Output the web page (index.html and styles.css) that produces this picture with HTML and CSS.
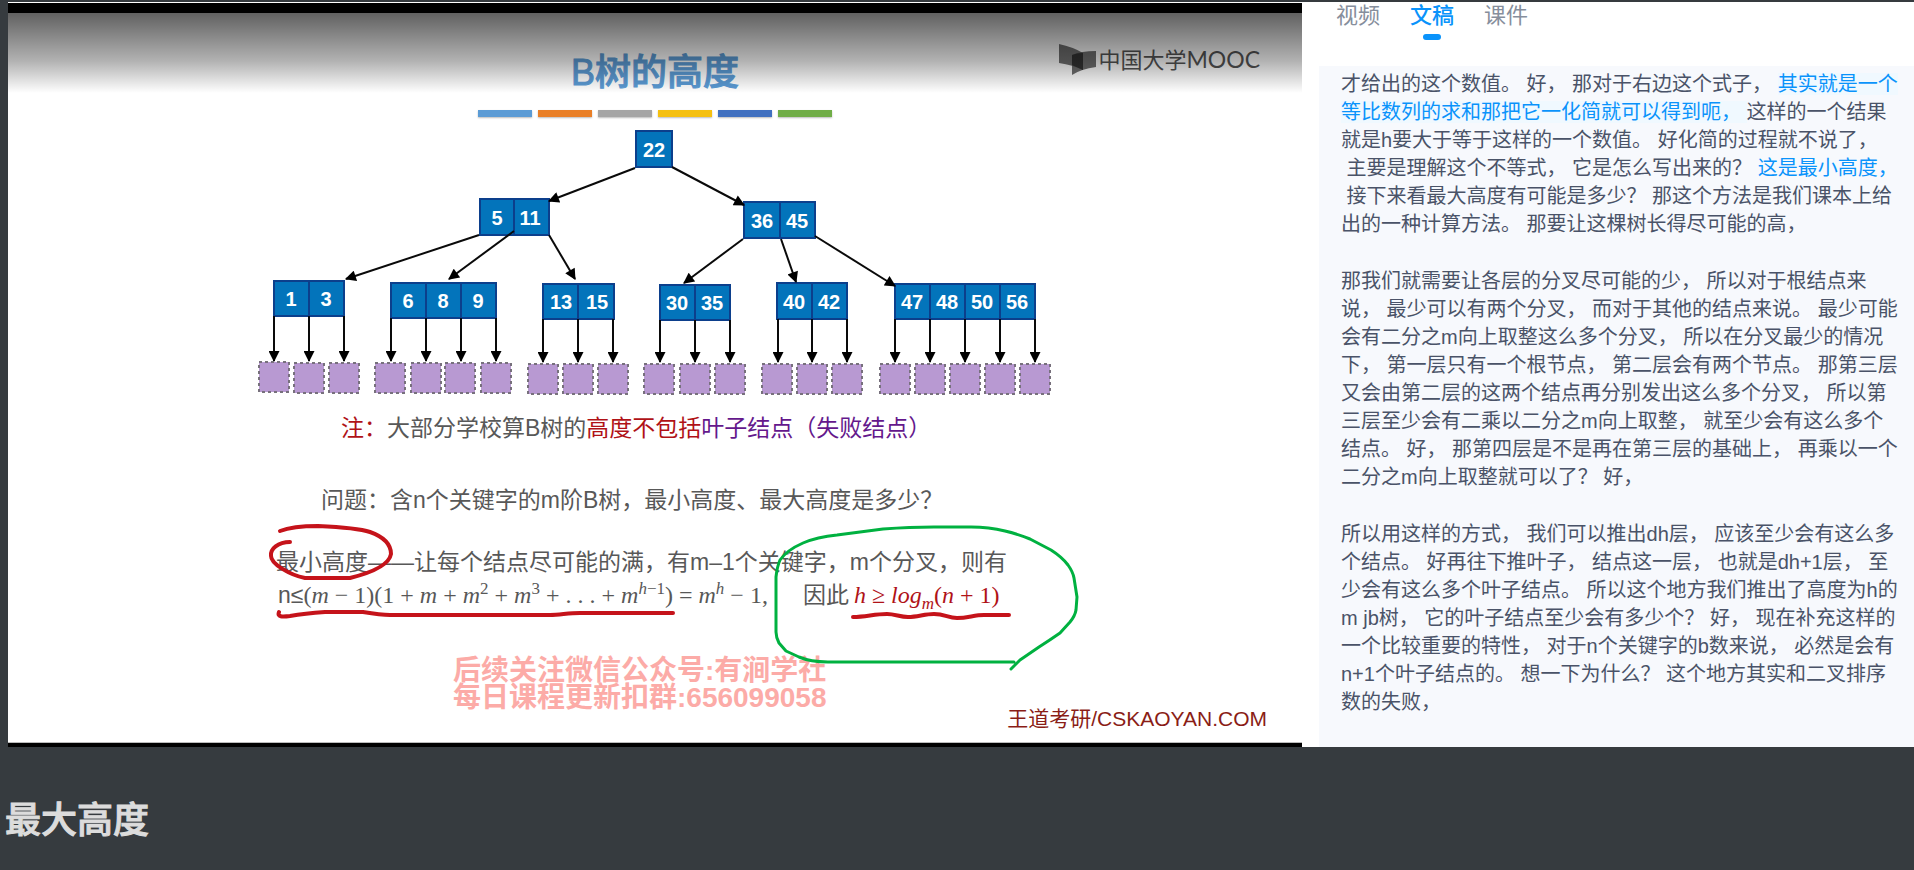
FILE: index.html
```html
<!DOCTYPE html>
<html lang="zh-CN">
<head>
<meta charset="utf-8">
<meta name="viewport" content="width=device-width, initial-scale=1">
<title>B树的高度</title>
<link rel="stylesheet" href="styles.css">
</head>
<body>
<main class="player">
  <section class="video" aria-label="视频画面">
    <div class="frame">
      <h1 class="title">B树的高度</h1>
      <div class="bars"><i class="bar sky"></i><i class="bar orange"></i><i class="bar gray"></i><i class="bar yellow"></i><i class="bar blue"></i><i class="bar green"></i></div>

      <svg class="tree" viewBox="8 126 1294 276" role="img" aria-label="B树">
        <defs>
          <marker id="tip" viewBox="0 0 10 10" refX="9" refY="5" markerWidth="12" markerHeight="11" markerUnits="userSpaceOnUse" orient="auto"><path d="M0 0 10 5 0 10z"/></marker>
        </defs>
        <g class="box">
          <rect x="636" y="131" width="36" height="36"/>
          <path d="M480 199h69v36h-69zM514 199v36"/>
          <path d="M744 202h71v36h-71zM780 202v36"/>
          <path d="M274 281h70v35h-70zM309 281v35"/>
          <path d="M391 283h105v35h-105zM426 283v35M461 283v35"/>
          <path d="M543 284h71v35h-71zM578 284v35"/>
          <path d="M660 285h70v35h-70zM695 285v35"/>
          <path d="M777 283h70v36h-70zM812 283v36"/>
          <path d="M895 284h140v35h-140zM930 284v35M965 284v35M1000 284v35"/>
        </g>
        <g class="edge">
          <path d="M635 168 549 201"/><path d="M672 167 744 205"/>
          <path d="M479 235 346 279"/><path d="M514 231 449 279"/><path d="M549 235 575 279"/>
          <path d="M743 239 684 283"/><path d="M781 239 796 282"/><path d="M815 236 895 286"/>
          <path d="M274 316V361"/><path d="M309 316V361"/><path d="M344 316V361"/>
          <path d="M391 318V361"/><path d="M426 318V361"/><path d="M461 318V361"/><path d="M496 318V361"/>
          <path d="M543 319V362"/><path d="M578 319V362"/><path d="M613 319V362"/>
          <path d="M660 320V362"/><path d="M695 320V362"/><path d="M730 320V362"/>
          <path d="M778 319V362"/><path d="M812 319V362"/><path d="M847 319V362"/>
          <path d="M895 319V362"/><path d="M930 319V362"/><path d="M965 319V362"/><path d="M1000 319V362"/><path d="M1035 319V362"/>
        </g>
        <g class="leaf">
          <rect x="259" y="362" width="30" height="30"/><rect x="294" y="363" width="30" height="30"/><rect x="329" y="363" width="30" height="30"/>
          <rect x="375" y="363" width="30" height="30"/><rect x="411" y="363" width="30" height="30"/><rect x="445" y="363" width="30" height="30"/><rect x="481" y="363" width="30" height="30"/>
          <rect x="528" y="364" width="30" height="30"/><rect x="563" y="364" width="30" height="30"/><rect x="598" y="364" width="30" height="30"/>
          <rect x="644" y="364" width="30" height="30"/><rect x="680" y="364" width="30" height="30"/><rect x="715" y="364" width="30" height="30"/>
          <rect x="762" y="364" width="30" height="30"/><rect x="797" y="364" width="30" height="30"/><rect x="832" y="364" width="30" height="30"/>
          <rect x="880" y="364" width="30" height="30"/><rect x="915" y="364" width="30" height="30"/><rect x="950" y="364" width="30" height="30"/><rect x="985" y="364" width="30" height="30"/><rect x="1020" y="364" width="30" height="30"/>
        </g>
        <g class="key">
          <text x="654" y="157">22</text>
          <text x="497" y="225">5</text><text x="530" y="225">11</text>
          <text x="762" y="228">36</text><text x="797" y="228">45</text>
          <text x="291" y="306">1</text><text x="326" y="306">3</text>
          <text x="408" y="308">6</text><text x="443" y="308">8</text><text x="478" y="308">9</text>
          <text x="561" y="309">13</text><text x="597" y="309">15</text>
          <text x="677" y="310">30</text><text x="712" y="310">35</text>
          <text x="794" y="309">40</text><text x="829" y="309">42</text>
          <text x="912" y="309">47</text><text x="947" y="309">48</text><text x="982" y="309">50</text><text x="1017" y="309">56</text>
        </g>
      </svg>

      <p class="line note"><span class="red">注：</span>大部分学校算B树的<span class="red">高度不包括</span><span class="purple">叶子结点（失败结点）</span></p>
      <p class="line question">问题：含n个关键字的m阶B树，最小高度、最大高度是多少？</p>
      <p class="line answer">最小高度——让每个结点尽可能的满，有m–1个关键字，m个分叉，则有</p>
      <p class="line formula">n≤<span class="math">(<i>m</i> − 1)(1 + <i>m</i> + <i>m</i><sup>2</sup> + <i>m</i><sup>3</sup> + . . . + <i>m</i><sup><i>h</i>−1</sup>) = <i>m</i><sup><i>h</i></sup> − 1,</span><span class="so">因此</span><span class="math red"><i>h</i> ≥ <i>log</i><sub><i>m</i></sub>(<i>n</i> + 1)</span></p>

      <div class="foot">
        <p class="promo">后续关注微信公众号:有涧学社<br>每日课程更新扣群:656099058</p>
        <p class="credit">王道考研/CSKAOYAN.COM</p>
      </div>

      <div class="logo">
        <svg width="37" height="32" viewBox="0 0 37 32" aria-hidden="true"><path fill="#4c4c4c" fill-opacity=".8" d="M0 0Q14 3 24 9V26Q14 21 0 19z"/><path fill="#4c4c4c" fill-opacity=".8" d="M37 7V23Q22 25 13 31V11Q22 7 37 7z"/><path fill="#333" d="M13 11Q18 9 24 9V26L13 21z"/></svg>
        <span>中国大学<span class="latin">MOOC</span></span>
      </div>
      <div class="shade"></div>
    </div>

    <svg class="ink" viewBox="8 2 1294 744" aria-hidden="true">
      <g class="pen-red">
        <path d="M280 531C290 527 302 526 318 526 340 527 358 528 370 532 384 537 391 545 391 554 389 566 370 573 350 578H305C290 575 271 564 271 556 270 549 278 542 290 542"/>
        <path d="M279 612C277 617 282 617 290 616 302 614 312 613 325 612H363C375 614 382 615 390 615H550C560 615 568 613 580 613H673"/>
        <path d="M853 617C866 617 874 614 887 614 895 614 900 617 908 617 918 617 924 614 934 614 945 614 948 618 957 618 968 618 974 615 984 615H1009"/>
      </g>
      <path class="pen-green" d="M1014 662H828C815 662 806 660 799 657L786 651 779 643Q776 637 776 632V577Q777 567 780 560 787 550 803 543 817 537 837 535L883 529Q910 527 934 527H971Q989 527 1005 531 1018 534 1030 539L1051 550Q1062 557 1068 565 1073 572 1074 578L1077 597 1076 610Q1075 616 1070 622L1060 633Q1050 640 1039 647L1020 660 1011 669"/>
    </svg>
  </section>

  <aside class="panel">
    <nav class="tabs">
      <button type="button" class="tab">视频</button>
      <button type="button" class="tab active">文稿</button>
      <button type="button" class="tab">课件</button>
    </nav>
    <div class="script">
<p>才给出的这个数值。 好， 那对于右边这个式子， <mark>其实就是一个
等比数列的求和那把它一化简就可以得到呃， </mark>这样的一个结果
就是h要大于等于这样的一个数值。 好化简的过程就不说了，
 主要是理解这个不等式， 它是怎么写出来的？ <em>这是最小高度，</em>
 接下来看最大高度有可能是多少？ 那这个方法是我们课本上给
出的一种计算方法。 那要让这棵树长得尽可能的高，</p>
<p>那我们就需要让各层的分叉尽可能的少， 所以对于根结点来
说， 最少可以有两个分叉， 而对于其他的结点来说。 最少可能
会有二分之m向上取整这么多个分叉， 所以在分叉最少的情况
下， 第一层只有一个根节点， 第二层会有两个节点。 那第三层
又会由第二层的这两个结点再分别发出这么多个分叉， 所以第
三层至少会有二乘以二分之m向上取整， 就至少会有这么多个
结点。 好， 那第四层是不是再在第三层的基础上， 再乘以一个
二分之m向上取整就可以了？ 好，</p>
<p>所以用这样的方式， 我们可以推出dh层， 应该至少会有这么多
个结点。 好再往下推叶子， 结点这一层， 也就是dh+1层， 至
少会有这么多个叶子结点。 所以这个地方我们推出了高度为h的
m jb树， 它的叶子结点至少会有多少个？ 好， 现在补充这样的
一个比较重要的特性， 对于n个关键字的b数来说， 必然是会有
n+1个叶子结点的。 想一下为什么？ 这个地方其实和二叉排序
数的失败，</p>
    </div>
  </aside>
</main>
<h2 class="heading">最大高度</h2>
</body>
</html>
```

FILE: styles.css
```css
* { box-sizing: border-box; }

body {
  margin: 0;
  background: #363b3f;
  font-family: "Liberation Sans", "Noto Sans CJK SC", sans-serif;
}

h1, h2, p { margin: 0; font-weight: 400; }

.player {
  display: grid;
  grid-template-columns: 1294fr 612fr;
  padding: 2px 0 0 8px;
}

/* slide */
.video {
  position: relative;
  border-top: 1px solid #fff;
  border-bottom: 4px solid #000;
  background: #fff;
}

.frame {
  position: relative;
  padding-top: 50px;
  border-bottom: 1px solid #bbb;
}

.title {
  color: #5b9bd5;
  font-size: 36px;
  font-weight: 500;
  line-height: 40px;
  text-align: center;
  -webkit-text-stroke: 1px #5b9bd5;
}

.bars {
  display: flex;
  justify-content: center;
  gap: 6px;
  margin-top: 17px;
}

.bar { width: 54px; height: 7px; box-shadow: 0 1px 2px #bbb; }
.sky { background: #5b9bd5; }
.orange { background: #e97f27; }
.gray { background: #a5a5a5; }
.yellow { background: #f5c010; }
.blue { background: #4070c0; }
.green { background: #70ad47; }

.tree { display: block; width: 100%; margin-top: 9px; }
.box { fill: #0374bb; stroke: #0c3f8c; stroke-width: 2; }
.edge { stroke: #0a0a0a; stroke-width: 2; }
.edge path { marker-end: url(#tip); }
.leaf { fill: #b899d2; stroke: #77707c; stroke-width: 2; stroke-dasharray: 3 3; }
.key { fill: #fff; font-size: 20px; font-weight: 700; text-anchor: middle; }

.line {
  color: #585858;
  font-size: 23px;
  line-height: 30px;
  white-space: nowrap;
}

.note { margin-top: 11px; padding-left: 333px; }
.question { margin-top: 42px; padding-left: 313px; }
.answer { margin-top: 32px; padding-left: 268px; }
.formula { display: flex; margin-top: 3px; padding-left: 270px; }
.math { font-family: "Liberation Serif", serif; font-size: 24px; white-space: pre; }
.math sup, .math sub { font-size: 17px; line-height: 0; }
.so { margin: 0 5px 0 35px; }
.red { color: #b01217; }
.purple { color: #64188c; }

.foot { display: flex; align-items: flex-end; justify-content: space-between; height: 132px; }
.promo {
  align-self: flex-start;
  padding: 47px 0 0 445px;
  color: #fcaba7;
  font-size: 28px;
  font-weight: 700;
  line-height: 27px;
  white-space: nowrap;
}
.credit { padding: 0 35px 9px 0; color: #8a1d16; font-size: 21px; line-height: 28px; white-space: nowrap; }

.logo {
  position: absolute;
  top: 40px;
  right: 42px;
  display: flex;
  align-items: center;
  gap: 2px;
  color: #555;
  font-family: Lato, "Noto Sans CJK SC", sans-serif;
  font-size: 22px;
  line-height: 32px;
}
.latin { font-size: 23px; }

.shade {
  position: absolute;
  inset: 0 0 auto;
  height: 90px;
  border-top: 10px solid #000;
  background: linear-gradient(rgba(0, 0, 0, .62), rgba(0, 0, 0, .3) 60%, transparent);
}

.ink { position: absolute; top: 0; left: 0; width: 100%; margin-top: -1px; fill: none; stroke-width: 4; stroke-linecap: round; stroke-linejoin: round; }
.pen-red { stroke: #c5131a; }
.pen-green { stroke: #00b140; stroke-width: 3; }

/* transcript */
.panel {
  display: flex;
  flex-direction: column;
  padding-left: 17px;
  background: #fff;
}

.tabs { display: flex; gap: 30px; padding: 0 0 26px 17px; }

.tab {
  display: flex;
  flex-direction: column;
  align-items: center;
  gap: 4px;
  padding: 0;
  border: 0;
  background: none;
  color: #868e9c;
  font: 22px/28px "Liberation Sans", "Noto Sans CJK SC", sans-serif;
}
.tab::after { content: ""; width: 18px; height: 6px; border-radius: 3px; }
.active { color: #0a93fb; font-weight: 500; }
.active::after { background: #0a93fb; }

.script {
  flex: 1;
  padding: 4px 0 0 22px;
  background: #f7f9fd;
  color: #4a5368;
  font-size: 20px;
  line-height: 28px;
}
.script p { white-space: pre-wrap; }
.script p + p { margin-top: 29px; }
.script mark { background: #f0f9ff; color: #0a93fb; }
.script em { color: #0a93fb; font-style: normal; }

.heading {
  padding: 48px 5px 24px;
  color: #dcdcdc;
  font-size: 36px;
  font-weight: 500;
  line-height: 52px;
  -webkit-text-stroke: 1px #dcdcdc;
}
```
